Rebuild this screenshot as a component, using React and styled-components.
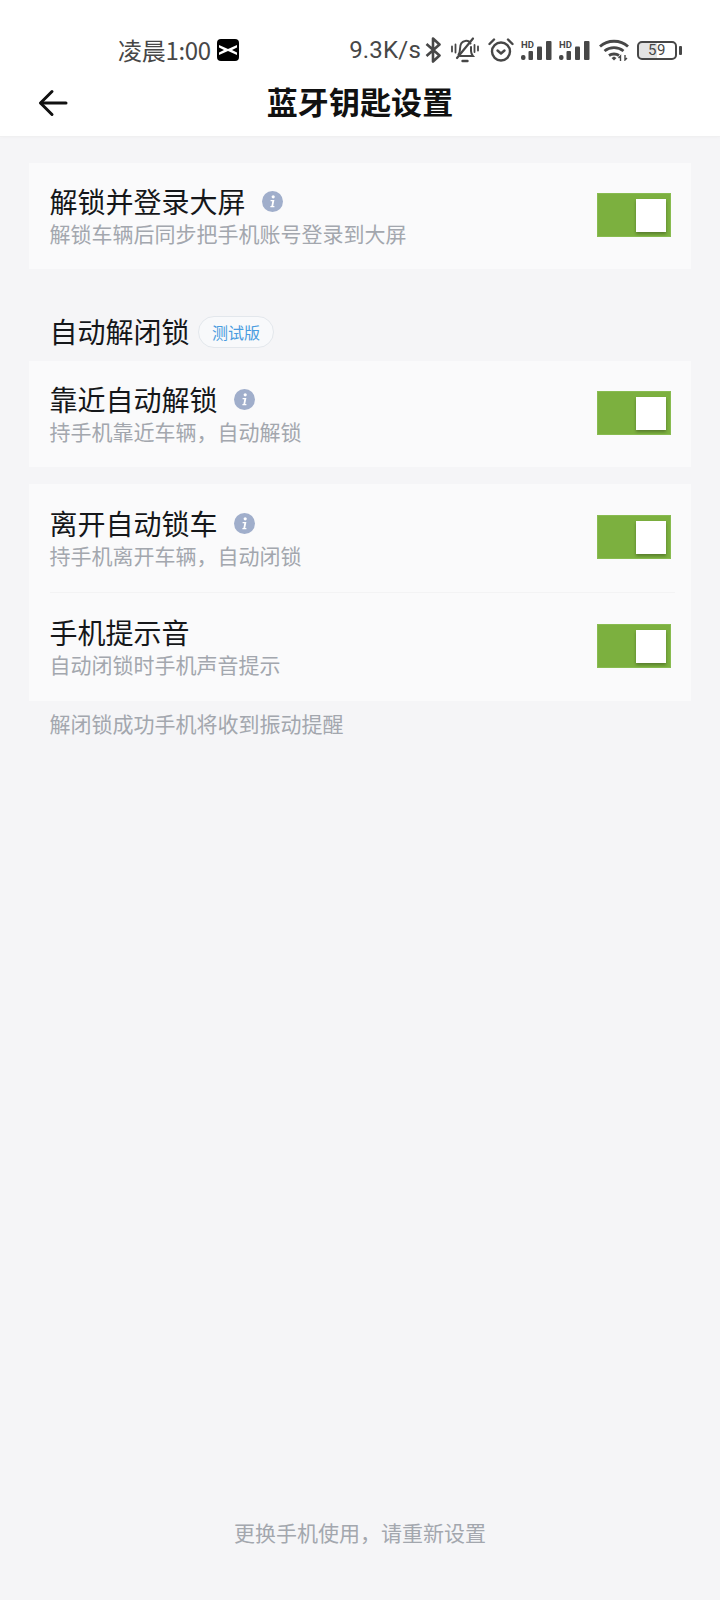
import React from 'react';
import styled, { createGlobalStyle } from 'styled-components';

const GlobalStyle = createGlobalStyle`
  html, body {
    margin: 0;
    padding: 0;
    background: #f5f5f7;
    font-family: "Noto Sans CJK SC", "Noto Sans", sans-serif;
  }
  * { box-sizing: border-box; }
`;

const Page = styled.div`
  width: 720px;
  height: 1600px;
  display: flex;
  flex-direction: column;
  background: #f5f5f7;
`;

const Header = styled.header`
  height: 137px;
  flex-shrink: 0;
  background: #fff;
  border-bottom: 1px solid #f0f0f1;
  box-shadow: 0 1px 3px rgba(0, 0, 0, 0.02);
`;

const StatusBar = styled.div`
  height: 70px;
  padding: 30px 43px 0 118px;
  display: flex;
  align-items: center;
  justify-content: space-between;
  color: #474747;
  font-size: 24px;
`;

const Clock = styled.div`
  display: flex;
  align-items: center;
  gap: 6px;
  line-height: 40px;
  letter-spacing: -0.3px;
`;

const StatusIcons = styled.div`
  display: flex;
  align-items: center;
`;

const Speed = styled.span`
  font-family: Roboto, sans-serif;
  font-size: 24px;
  line-height: 40px;
  letter-spacing: 0.2px;
`;

const Glyph = styled.span`
  display: flex;
  margin-left: ${(p) => p.$left}px;
`;

const NavBar = styled.div`
  height: 62px;
  padding: 4px 0 0 38px;
  display: flex;
  align-items: center;
  position: relative;
`;

const Title = styled.h1`
  position: absolute;
  left: 0;
  right: 0;
  top: 9px;
  margin: 0;
  text-align: center;
  font-size: 31px;
  line-height: 44px;
  font-weight: 700;
  letter-spacing: 0.1px;
  color: #111;
`;

const Body = styled.main`
  flex: 1;
  padding: 26px 29px 0;
  display: flex;
  flex-direction: column;
`;

const Card = styled.section`
  background: #fafafb;
  margin-bottom: ${(p) => p.$gap || 0}px;
`;

const Row = styled.div`
  height: ${(p) => p.$height || 106}px;
  padding: 0 20px 0 20.5px;
  display: flex;
  align-items: center;
  justify-content: space-between;
`;

const Divider = styled.div`
  height: 1px;
  margin: 0 16px 0 21px;
  background: #f3f3f4;
`;

const RowText = styled.div`
  display: flex;
  flex-direction: column;
  padding-bottom: 4px;
`;

const RowTitle = styled.div`
  display: flex;
  align-items: center;
  gap: 16px;
  font-size: 28px;
  line-height: 38px;
  color: #15171a;
`;

const RowHint = styled.div`
  font-size: 21px;
  line-height: 26px;
  color: #a3a7ae;
`;

const Toggle = styled.div`
  width: 74px;
  height: 44px;
  margin-bottom: 2px;
  padding: 6px 5px 0 0;
  display: flex;
  justify-content: flex-end;
  align-items: flex-start;
  background: #7cb03f;
  box-shadow: inset 0 0 0 1px #88bb50;
`;

const Knob = styled.div`
  width: 30px;
  height: 33px;
  background: #fff;
  box-shadow: 0 2px 3px rgba(0, 0, 0, 0.3);
`;

const SectionHead = styled.div`
  height: 92px;
  padding: 32px 0 0 20.5px;
  display: flex;
  align-items: center;
  gap: 8.5px;
  font-size: 28px;
  color: #15171a;
`;

const Badge = styled.span`
  width: 76px;
  height: 32px;
  margin-top: 1px;
  border: 1px solid #e3e7ec;
  border-radius: 16px;
  display: flex;
  align-items: center;
  justify-content: center;
  font-size: 16px;
  color: #4a9ce0;
  background: #f8f9fb;
`;

const Note = styled.p`
  margin: 7px 0 0 20.5px;
  font-size: 21px;
  line-height: 30px;
  color: #a3a7ae;
`;

const Footer = styled.p`
  margin: auto 0 53px;
  text-align: center;
  font-size: 21px;
  line-height: 30px;
  color: #a3a7ae;
`;

const Battery = styled.div`
  width: 40px;
  height: 19px;
  border: 2px solid #474747;
  border-radius: 5px;
  display: flex;
  align-items: center;
  justify-content: center;
  font-family: Roboto, sans-serif;
  font-size: 15px;
  letter-spacing: 0.5px;
  color: #474747;
  background: linear-gradient(90deg, #e4e4e4 50%, #fff 50%);
  position: relative;
  &::after {
    content: '';
    position: absolute;
    right: -7px;
    top: 3px;
    width: 3px;
    height: 9px;
    border-radius: 1px;
    background: #474747;
  }
`;

function InfoIcon() {
  return (
    <svg width="21" height="21" viewBox="0 0 21 21">
      <circle cx="10.5" cy="10.5" r="10.5" fill="#a0aecb" />
      <circle cx="11.2" cy="5.8" r="1.6" fill="#fff" />
      <path d="M8.6 9h3.8l-1.2 6h1.2v1.2H8.4V15h1l.9-4.8H8.6z" fill="#fff" />
    </svg>
  );
}

function BackArrow() {
  return (
    <svg width="30" height="28" viewBox="0 0 30 28" fill="none" stroke="#111" strokeWidth="3" strokeLinecap="round" strokeLinejoin="round">
      <path d="M28 14H3" />
      <path d="M14 2.500L2.500 14 14 25.500" />
    </svg>
  );
}

function MailBadge() {
  return (
    <svg width="22" height="22" viewBox="0 0 22 22">
      <rect width="22" height="22" rx="4" fill="#000" />
      <path d="M2 6l9 4 9-4v2.500L15 11l5 2.500V16l-9-4-9 4v-2.500L7 11 2 8.500z" fill="#fff" />
    </svg>
  );
}

function BluetoothIcon() {
  return (
    <svg width="16" height="26" viewBox="0 0 16 26" fill="none" stroke="#474747" strokeWidth="2.600" strokeLinejoin="round">
      <path d="M1.500 7l13 11.500L8 24.500V1.500l6.500 6L1.500 19" />
    </svg>
  );
}

function MutedBell() {
  return (
    <svg width="28" height="28" viewBox="0 0 28 28" fill="none" stroke="#474747" strokeWidth="2" strokeLinecap="round">
      <path d="M7.500 18.500c1.200-1.500 1.500-3 1.500-5.500 0-4.500 2-7.500 5-8 2.500-.5 4.500 .5 5.500 2.500" />
      <path d="M20 11v4c0 2 .8 3.500 2 5H9" />
      <path d="M11.500 25h5" strokeWidth="2.400" />
      <path d="M22 2.500L6 22" strokeWidth="2.200" />
      <path d="M1 10.500v5M4.500 8.500v8M23.500 9v7M27 10.500v4" strokeWidth="1.800" />
    </svg>
  );
}

function Alarm() {
  return (
    <svg width="26" height="26" viewBox="0 0 26 26" fill="none" stroke="#474747" strokeWidth="2.400" strokeLinecap="round" strokeLinejoin="round">
      <circle cx="13" cy="14.500" r="9" />
      <path d="M9.500 13.500l3.500 3 3.500-3" />
      <path d="M1.500 7L6 2.500M24.500 7L20 2.500" />
    </svg>
  );
}

function Signal() {
  return (
    <svg width="32" height="20" viewBox="0 0 32 20" fill="#474747">
      <text x="0" y="7.500" fontFamily="Roboto, sans-serif" fontSize="9.500" fontWeight="700">HD</text>
      <rect x="0" y="15" width="4.500" height="5" rx="2" />
      <rect x="7.500" y="11" width="4.500" height="9" rx="1" />
      <rect x="16" y="6.500" width="5" height="13.500" rx="1" />
      <rect x="25" y="1" width="5.500" height="19" rx="1" />
    </svg>
  );
}

function Wifi() {
  return (
    <svg width="30" height="22" viewBox="0 0 30 22" fill="none" stroke="#474747" strokeWidth="2.800">
      <path d="M1 7.500C8.500 .5 21.500 .5 29 7.500" />
      <path d="M5.500 12c5.500-4.500 13.500-4.500 19 0" />
      <path d="M10 16.500c2.800-2 7.200-2 10 0" />
      <path d="M12.500 19l2.500 2.500 2.500-2.500-2.500-1.500z" fill="#474747" stroke="none" />
      <path d="M21.500 22v-5l-2 2M26 16v5l2-2" strokeWidth="1.400" />
    </svg>
  );
}

function SettingRow({ title, hint, info, height }) {
  return (
    <Row $height={height}>
      <RowText>
        <RowTitle>
          {title}
          {info && <InfoIcon />}
        </RowTitle>
        <RowHint>{hint}</RowHint>
      </RowText>
      <Toggle>
        <Knob />
      </Toggle>
    </Row>
  );
}

export default function App() {
  return (
    <Page>
      <GlobalStyle />
      <Header>
        <StatusBar>
          <Clock>
            凌晨1:00
            <MailBadge />
          </Clock>
          <StatusIcons>
            <Speed>9.3K/s</Speed>
            <Glyph $left={4}><BluetoothIcon /></Glyph>
            <Glyph $left={10}><MutedBell /></Glyph>
            <Glyph $left={9}><Alarm /></Glyph>
            <Glyph $left={7}><Signal /></Glyph>
            <Glyph $left={6}><Signal /></Glyph>
            <Glyph $left={8}><Wifi /></Glyph>
            <Glyph $left={8}><Battery>59</Battery></Glyph>
          </StatusIcons>
        </StatusBar>
        <NavBar>
          <BackArrow />
          <Title>蓝牙钥匙设置</Title>
        </NavBar>
      </Header>
      <Body>
        <Card>
          <SettingRow title="解锁并登录大屏" hint="解锁车辆后同步把手机账号登录到大屏" info />
        </Card>
        <SectionHead>
          自动解闭锁
          <Badge>测试版</Badge>
        </SectionHead>
        <Card $gap={17}>
          <SettingRow title="靠近自动解锁" hint="持手机靠近车辆，自动解锁" info />
        </Card>
        <Card>
          <SettingRow title="离开自动锁车" hint="持手机离开车辆，自动闭锁" info height={108} />
          <Divider />
          <SettingRow title="手机提示音" hint="自动闭锁时手机声音提示" height={108} />
        </Card>
        <Note>解闭锁成功手机将收到振动提醒</Note>
        <Footer>更换手机使用，请重新设置</Footer>
      </Body>
    </Page>
  );
}
